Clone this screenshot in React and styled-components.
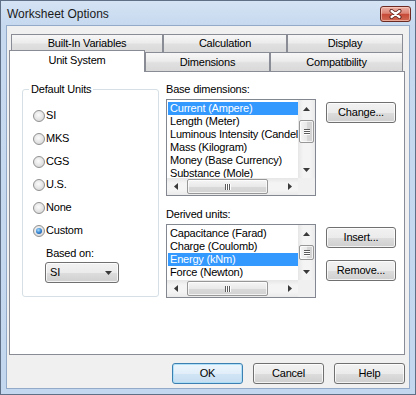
import React from "react";
import styled, { createGlobalStyle, css } from "styled-components";

const Global = createGlobalStyle`
  html, body { margin: 0; padding: 0; background: #ffffff; }
  body { font-family: "Liberation Sans", Arial, sans-serif; }
  *, *::before, *::after { box-sizing: border-box; }
`;

const uiFont = css`
  font-family: "Liberation Sans", Arial, sans-serif;
  font-size: 11px;
  line-height: 13px;
  letter-spacing: -0.2px;
  color: #000;
`;

const Window = styled.div`
  width: 416px;
  height: 395px;
  border: 1px solid #5e6f86;
  background: linear-gradient(#d5e3f4 0px, #c6d9ef 24px, #c3d7ee 100%);
  display: flex;
  flex-direction: column;
`;

const TitleBar = styled.div`
  height: 24px;
  display: flex;
  align-items: flex-start;
  justify-content: space-between;
  padding: 0 4px 0 6px;
`;

const Title = styled.span`
  font-family: "Liberation Sans", Arial, sans-serif;
  font-size: 12px;
  line-height: 14px;
  margin-top: 6px;
  color: #1a1a1a;
`;

const CloseButton = styled.div`
  width: 31px;
  height: 16px;
  margin-top: 5px;
  border: 1px solid #6b2a22;
  border-radius: 3px;
  background: linear-gradient(#eab0a4 0%, #dd8576 45%, #c64a37 52%, #d16b55 100%);
  box-shadow: inset 0 0 0 1px rgba(255, 220, 210, 0.55);
  display: flex;
  align-items: center;
  justify-content: center;
`;

const Client = styled.div`
  flex: 1;
  margin: 0 5px 5px 5px;
  border: 1px solid #93abc8;
  background: #f0f0f0;
  display: flex;
  flex-direction: column;
  padding: 8px 4px 0 2px;
`;

const TabsBlock = styled.div`
  width: 396px;
  display: flex;
  flex-direction: column;
`;

const TabRow = styled.div`
  display: flex;
  align-items: flex-end;
  height: ${(p) => p.$h}px;
  padding-left: ${(p) => p.$indent || 0}px;
`;

const Tab = styled.div`
  ${uiFont};
  width: ${(p) => p.$w}px;
  height: ${(p) => (p.$active ? 22 : p.$h || 19)}px;
  border: 1px solid #898c95;
  border-bottom: none;
  display: flex;
  align-items: center;
  justify-content: center;
  padding-bottom: ${(p) => (p.$active ? 2 : 0)}px;
  background: ${(p) =>
    p.$active
      ? "#ffffff"
      : "linear-gradient(#f7f7f7 0%, #ececec 45%, #e0e0e0 55%, #d9d9d9 100%)"};
  ${(p) =>
    p.$active &&
    css`
      position: relative;
      z-index: 1;
      margin-bottom: -1px;
    `}
`;

const Panel = styled.div`
  height: 284px;
  border: 1px solid #898c95;
  background: #ffffff;
  display: grid;
  grid-template-columns: 137px 1fr;
  column-gap: 7px;
  padding: 11px 0 0 12px;
  align-items: start;
`;

const Group = styled.fieldset`
  margin: 0;
  width: 137px;
  border: 1px solid #d5dfe5;
  border-radius: 3px;
  padding: 8px 0 13px 10px;
  display: flex;
  flex-direction: column;
`;

const Legend = styled.legend`
  ${uiFont};
  padding: 0 2px;
  margin-left: -4px;
`;

const RadioRow = styled.div`
  ${uiFont};
  height: 23px;
  display: flex;
  align-items: center;
  gap: 1px;
`;

const RadioCircle = styled.span`
  width: 12px;
  height: 12px;
  border-radius: 50%;
  border: 1px solid #919191;
  background: radial-gradient(circle at 45% 40%, #fbfbfb 0%, #e8e8e8 45%, #cdcdcd 100%);
  display: flex;
  align-items: center;
  justify-content: center;
`;

const RadioDot = styled.span`
  width: 6px;
  height: 6px;
  border-radius: 50%;
  background: radial-gradient(circle at 40% 35%, #a6dcfb 0%, #2f7fce 55%, #103f86 100%);
`;

const BasedLabel = styled.div`
  ${uiFont};
  margin: 5px 0 2px 13px;
`;

const Combo = styled.div`
  ${uiFont};
  width: 74px;
  height: 21px;
  margin-left: 12px;
  border: 1px solid #707070;
  border-radius: 3px;
  background: linear-gradient(#f2f2f2 0%, #ebebeb 50%, #dddddd 51%, #cfcfcf 100%);
  box-shadow: inset 0 0 0 1px rgba(255, 255, 255, 0.75);
  display: flex;
  align-items: center;
  justify-content: space-between;
  padding: 0 6px 0 4px;
`;

const RightCol = styled.div`
  display: flex;
  flex-direction: column;
`;

const Label = styled.div`
  ${uiFont};
  margin-top: ${(p) => p.$mt || 0}px;
  margin-bottom: 3px;
`;

const ListRow = styled.div`
  display: flex;
  align-items: flex-start;
  gap: 10px;
`;

const ListBox = styled.div`
  width: 150px;
  height: ${(p) => p.$h}px;
  border: 1px solid #828790;
  background: #ffffff;
  display: grid;
  grid-template-columns: 1fr 17px;
  grid-template-rows: 1fr 17px;
`;

const Items = styled.div`
  overflow: hidden;
  padding: 2px 0 0 1px;
`;

const Item = styled.div`
  ${uiFont};
  height: 13px;
  padding-left: 2px;
  white-space: nowrap;
  background: ${(p) => (p.$sel ? "#3399ff" : "transparent")};
  color: ${(p) => (p.$sel ? "#ffffff" : "#000000")};
`;

const VScroll = styled.div`
  background: linear-gradient(to right, #e6e6e6, #f4f4f4 30%, #f4f4f4 70%, #eaeaea);
  display: flex;
  flex-direction: column;
  align-items: center;
`;

const HScroll = styled.div`
  background: linear-gradient(#e6e6e6, #f4f4f4 30%, #f4f4f4 70%, #eaeaea);
  display: flex;
  align-items: center;
`;

const Corner = styled.div`
  background: #f0f0f0;
`;

const ArrowCell = styled.div`
  width: 17px;
  height: 17px;
  flex: none;
  display: flex;
  align-items: center;
  justify-content: center;
`;

const Spacer = styled.div`
  flex: 1;
`;

const VThumb = styled.div`
  width: 15px;
  height: ${(p) => p.$len}px;
  margin-top: 3px;
  border: 1px solid #979797;
  border-radius: 2px;
  background: linear-gradient(to right, #f5f5f5 0%, #e9e9e9 50%, #d9d9d9 51%, #d2d2d2 100%);
  box-shadow: inset 0 0 0 1px rgba(255, 255, 255, 0.7);
  display: flex;
  flex-direction: column;
  align-items: center;
  justify-content: center;
  gap: 1px;
`;

const HThumb = styled.div`
  height: 15px;
  width: ${(p) => p.$len}px;
  margin-left: 3px;
  border: 1px solid #979797;
  border-radius: 2px;
  background: linear-gradient(#f5f5f5 0%, #e9e9e9 50%, #d9d9d9 51%, #d2d2d2 100%);
  box-shadow: inset 0 0 0 1px rgba(255, 255, 255, 0.7);
  display: flex;
  align-items: center;
  justify-content: center;
  gap: 1px;
`;

const GripH = styled.span`
  width: 6px;
  height: 1px;
  background: #5b5b5b;
  box-shadow: 0 1px 0 #ffffff;
`;

const GripV = styled.span`
  width: 1px;
  height: 6px;
  background: #5b5b5b;
  box-shadow: 1px 0 0 #ffffff;
`;

const SideButtons = styled.div`
  display: flex;
  flex-direction: column;
  gap: 12px;
  padding-top: 3px;
`;

const Button = styled.button`
  ${uiFont};
  width: ${(p) => p.$w || 70}px;
  height: 21px;
  padding: 0;
  border-radius: 3px;
  border: 1px solid ${(p) => (p.$default ? "#3c7fb1" : "#707070")};
  background: ${(p) =>
    p.$default
      ? "linear-gradient(#ecf5fc 0%, #e1eef9 50%, #d1e5f5 51%, #c6ddf0 100%)"
      : "linear-gradient(#f2f2f2 0%, #ebebeb 50%, #dddddd 51%, #cfcfcf 100%)"};
  box-shadow: inset 0 0 0 1px
    ${(p) => (p.$default ? "rgba(170, 222, 248, 0.9)" : "rgba(255, 255, 255, 0.75)")};
`;

const Footer = styled.div`
  display: flex;
  justify-content: flex-end;
  gap: 10px;
  margin-top: 8px;
`;

const Tri = ({ dir }) => {
  const pts = {
    up: "0,4 3.5,0 7,4",
    down: "0,0 7,0 3.5,4",
    left: "4,0 4,7 0,3.5",
    right: "0,0 0,7 4,3.5",
  }[dir];
  const vertical = dir === "up" || dir === "down";
  return (
    <svg width={vertical ? 7 : 4} height={vertical ? 4 : 7} viewBox={vertical ? "0 0 7 4" : "0 0 4 7"}>
      <polygon points={pts} fill="#3a3a3a" />
    </svg>
  );
};

const Radio = ({ label, checked }) => (
  <RadioRow>
    <RadioCircle>{checked && <RadioDot />}</RadioCircle>
    <span>{label}</span>
  </RadioRow>
);

const List = ({ items, selected, height, vThumb }) => (
  <ListBox $h={height}>
    <Items>
      {items.map((it, i) => (
        <Item key={it} $sel={i === selected}>
          {it}
        </Item>
      ))}
    </Items>
    <VScroll>
      <ArrowCell>
        <Tri dir="up" />
      </ArrowCell>
      <VThumb $len={vThumb}>
        <GripH />
        <GripH />
        <GripH />
      </VThumb>
      <Spacer />
      <ArrowCell>
        <Tri dir="down" />
      </ArrowCell>
    </VScroll>
    <HScroll>
      <ArrowCell>
        <Tri dir="left" />
      </ArrowCell>
      <HThumb $len={81}>
        <GripV />
        <GripV />
        <GripV />
      </HThumb>
      <Spacer />
      <ArrowCell>
        <Tri dir="right" />
      </ArrowCell>
    </HScroll>
    <Corner />
  </ListBox>
);

const baseDims = [
  "Current (Ampere)",
  "Length (Meter)",
  "Luminous Intensity (Candela)",
  "Mass (Kilogram)",
  "Money (Base Currency)",
  "Substance (Mole)",
];

const derived = [
  "Capacitance (Farad)",
  "Charge (Coulomb)",
  "Energy (kNm)",
  "Force (Newton)",
];

export default function App() {
  return (
    <>
      <Global />
      <Window>
        <TitleBar>
          <Title>Worksheet Options</Title>
          <CloseButton>
            <svg width="13" height="10" viewBox="-6.5 -5 13 10">
              <path d="M-4 -3 L4 3 M4 -3 L-4 3" stroke="#5a1f18" strokeWidth="4" strokeLinecap="round" />
              <path d="M-4 -3 L4 3 M4 -3 L-4 3" stroke="#ffffff" strokeWidth="2.2" strokeLinecap="round" />
            </svg>
          </CloseButton>
        </TitleBar>
        <Client>
          <TabsBlock>
            <TabRow $h={18} $indent={2}>
              <Tab $w={152} $h={18}>Built-In Variables</Tab>
              <Tab $w={124} $h={18}>Calculation</Tab>
              <Tab $w={116} $h={18}>Display</Tab>
            </TabRow>
            <TabRow $h={19}>
              <Tab $w={136} $active>Unit System</Tab>
              <Tab $w={125}>Dimensions</Tab>
              <Tab $w={133}>Compatibility</Tab>
            </TabRow>
            <Panel>
              <Group>
                <Legend>Default Units</Legend>
                <Radio label="SI" />
                <Radio label="MKS" />
                <Radio label="CGS" />
                <Radio label="U.S." />
                <Radio label="None" />
                <Radio label="Custom" checked />
                <BasedLabel>Based on:</BasedLabel>
                <Combo>
                  <span>SI</span>
                  <Tri dir="down" />
                </Combo>
              </Group>
              <RightCol>
                <Label>Base dimensions:</Label>
                <ListRow>
                  <List items={baseDims} selected={0} height={97} vThumb={23} />
                  <SideButtons>
                    <Button>Change...</Button>
                  </SideButtons>
                </ListRow>
                <Label $mt={12}>Derived units:</Label>
                <ListRow>
                  <List items={derived} selected={2} height={74} vThumb={15} />
                  <SideButtons>
                    <Button>Insert...</Button>
                    <Button>Remove...</Button>
                  </SideButtons>
                </ListRow>
              </RightCol>
            </Panel>
          </TabsBlock>
          <Footer>
            <Button $w={71} $default>OK</Button>
            <Button $w={71}>Cancel</Button>
            <Button $w={71}>Help</Button>
          </Footer>
        </Client>
      </Window>
    </>
  );
}
